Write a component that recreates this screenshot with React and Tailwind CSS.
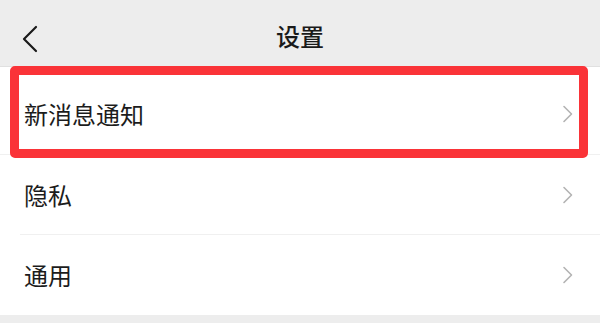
import React from 'react';

const Chevron = () => (
  <svg width="12" height="18" viewBox="0 0 12 18" fill="none" className="shrink-0">
    <path d="M2 1.5 L9.5 9 L2 16.5" stroke="#b3b3b3" strokeWidth="1.6" strokeLinecap="round" strokeLinejoin="round" />
  </svg>
);

const rows = ['隐私', '通用'];

function App() {
  return (
    <div className="relative w-[600px] h-[323px] bg-[#ededed] overflow-hidden" style={{ fontFamily: '"Noto Sans CJK SC", "Noto Sans", sans-serif' }}>
      {/* Header */}
      <div className="h-[67px] flex items-center relative border-b border-[#e0e0e0]">
        <svg width="18" height="28" viewBox="0 0 18 28" fill="none" className="absolute left-[21px] top-[25px]">
          <path d="M15 2 L3 14 L15 26" stroke="#1a1a1a" strokeWidth="2.2" strokeLinecap="round" strokeLinejoin="round" />
        </svg>
        <div className="w-full text-center text-[24px] font-medium text-[#1a1a1a] pt-[6px]">设置</div>
      </div>

      {/* List */}
      <div className="bg-white">
        <div className="h-[88px] flex items-center justify-between pl-[24px] pr-[26px] pt-[6px] border-b border-[#f0f0f0]">
          <span className="text-[24px] text-[#1c1c1c]">新消息通知</span>
          <Chevron />
        </div>
        {rows.map((label, i) => (
          <div key={label} className="ml-[20px]">
            <div className={'h-[80px] flex items-center justify-between pl-[4px] pr-[26px]' + (i === 0 ? ' border-b border-[#f0f0f0]' : '')}>
              <span className="text-[24px] text-[#1c1c1c]">{label}</span>
              <Chevron />
            </div>
          </div>
        ))}
      </div>

      {/* Highlight box */}
      <div className="absolute left-[10px] top-[66px] w-[578px] h-[92px] border-[9px] border-[#fa3338] rounded-[5px]" />
    </div>
  );
}

export default App;
